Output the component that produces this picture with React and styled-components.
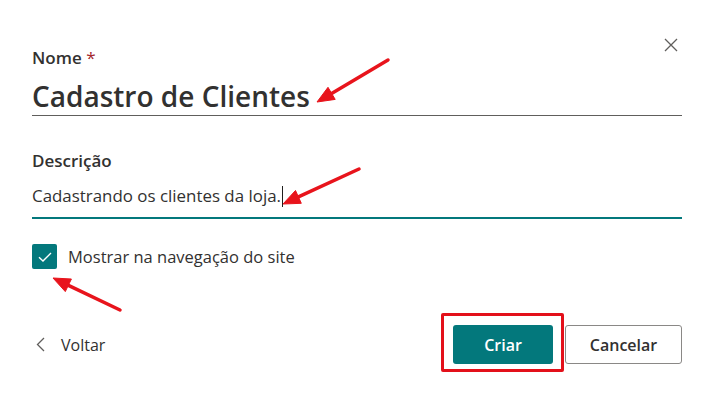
import React from 'react'
import styled, { createGlobalStyle } from 'styled-components'

const GlobalStyle = createGlobalStyle`
  html, body {
    margin: 0;
    padding: 0;
    background: #ffffff;
  }
  body {
    font-family: 'Open Sans', 'Noto Sans', sans-serif;
    color: #323130;
  }
`

// red annotation arrows drawn over the form: [tail, shaft end, head points]
const arrows = [
  { line: [388, 60, 331.6, 93.4], head: '317,102 335.2,99.4 328,87.3' },
  { line: [359, 169, 298.4, 196.9], head: '283,204 301.3,203.3 295.5,190.5' },
  { line: [120, 310, 68.4, 285.3], head: '53,278 65.3,291.6 71.4,279' },
]

export default function App() {
  return (
    <>
      <GlobalStyle />
      <Panel>
        <CloseButton aria-label="Fechar">
          <svg width="14" height="14" viewBox="0 0 14 14">
            <path d="M1 1 L13 13 M13 1 L1 13" stroke="#605e5c" strokeWidth="1.3" fill="none" />
          </svg>
        </CloseButton>

        <Field>
          <Label>
            Nome <Required>*</Required>
          </Label>
          <TitleInput>Cadastro de Clientes</TitleInput>
        </Field>

        <Field $gap={34}>
          <Label>Descrição</Label>
          <TextInput>
            Cadastrando os clientes da loja.<Caret />
          </TextInput>
        </Field>

        <CheckRow>
          <CheckBox>
            <svg width="14" height="10" viewBox="0 0 14 10">
              <path d="M1 5.2 L5 9 L13 1" stroke="#fff" strokeWidth="1.4" fill="none" />
            </svg>
          </CheckBox>
          <CheckLabel>Mostrar na navegação do site</CheckLabel>
        </CheckRow>

        <Footer>
          <BackLink>
            <svg width="9" height="15" viewBox="0 0 9 15">
              <path d="M8 1 L1.5 7.5 L8 14" stroke="#605e5c" strokeWidth="1.3" fill="none" />
            </svg>
            <span>Voltar</span>
          </BackLink>
          <Actions>
            <Highlight>
              <PrimaryButton>Criar</PrimaryButton>
            </Highlight>
            <SecondaryButton>Cancelar</SecondaryButton>
          </Actions>
        </Footer>

        <Annotations width="719" height="400" viewBox="0 0 719 400">
          {arrows.map((a, i) => (
            <g key={i} fill="#e8141c" stroke="#e8141c">
              <line x1={a.line[0]} y1={a.line[1]} x2={a.line[2]} y2={a.line[3]} strokeWidth="3.5" strokeLinecap="round" />
              <polygon points={a.head} strokeWidth="1" strokeLinejoin="round" />
            </g>
          ))}
        </Annotations>
      </Panel>
    </>
  )
}

const Panel = styled.div`
  position: relative;
  width: 719px;
  height: 400px;
  box-sizing: border-box;
  padding: 47px 37px 0 32px;
  display: flex;
  flex-direction: column;
`

const CloseButton = styled.button`
  position: absolute;
  top: 38px;
  right: 41px;
  width: 14px;
  height: 14px;
  padding: 0;
  border: none;
  background: none;
  display: flex;
`

const Field = styled.div`
  display: flex;
  flex-direction: column;
  margin-top: ${(p) => p.$gap || 0}px;
`

const Label = styled.div`
  font-size: 17px;
  font-weight: 600;
  line-height: 22px;
  color: #323130;
`

const Required = styled.span`
  color: #a4262c;
  font-weight: 400;
`

const TitleInput = styled.div`
  margin-top: 9px;
  font-size: 28px;
  font-weight: 600;
  line-height: 36px;
  padding-bottom: 1px;
  border-bottom: 1px solid #605e5c;
  color: #323130;
`

const TextInput = styled.div`
  display: flex;
  align-items: center;
  margin-top: 12px;
  font-size: 16.9px;
  line-height: 24px;
  padding-bottom: 9px;
  border-bottom: 2px solid #03787c;
  color: #323130;
`

const Caret = styled.span`
  display: inline-block;
  width: 1px;
  height: 21px;
  background: #201f1e;
  margin-left: 1px;
`

const CheckRow = styled.div`
  display: flex;
  align-items: center;
  gap: 11px;
  margin-top: 25px;
`

const CheckBox = styled.div`
  width: 25px;
  height: 25px;
  border-radius: 2px;
  background: #03787c;
  display: flex;
  align-items: center;
  justify-content: center;
`

const CheckLabel = styled.span`
  font-size: 16.5px;
  line-height: 22px;
  color: #323130;
`

const Footer = styled.div`
  display: flex;
  align-items: center;
  justify-content: space-between;
  margin-top: 56px;
`

const BackLink = styled.div`
  display: flex;
  align-items: center;
  gap: 16px;
  padding-left: 4px;
  font-size: 16px;
  color: #323130;
`

const Actions = styled.div`
  display: flex;
  gap: 12px;
`

const Highlight = styled.div`
  position: relative;
  display: flex;

  &::after {
    content: '';
    position: absolute;
    top: -12px;
    left: -12px;
    right: -11px;
    bottom: -8px;
    border: 3px solid #e3101a;
    border-radius: 2px;
    pointer-events: none;
  }
`

const PrimaryButton = styled.button`
  width: 100px;
  height: 39px;
  border: none;
  border-radius: 3px;
  background: #03787c;
  color: #ffffff;
  font-family: inherit;
  font-size: 16px;
  font-weight: 600;
`

const SecondaryButton = styled.button`
  width: 117px;
  height: 39px;
  border: 1px solid #8a8886;
  border-radius: 3px;
  background: #ffffff;
  color: #323130;
  font-family: inherit;
  font-size: 16px;
  font-weight: 600;
`

const Annotations = styled.svg`
  position: absolute;
  left: 0;
  top: 0;
  pointer-events: none;
`
